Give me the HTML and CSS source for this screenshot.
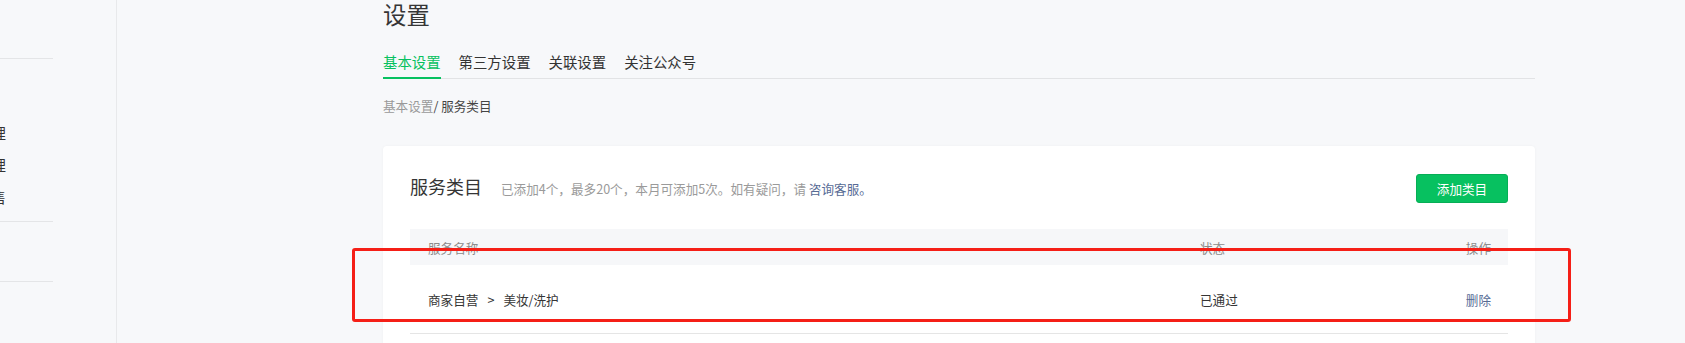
FILE: index.html
```html
<!DOCTYPE html>
<html lang="zh-CN">
<head>
<meta charset="utf-8">
<title>设置</title>
<link rel="stylesheet" href="styles.css">
</head>
<body>
<div class="app">
  <aside class="sidebar">
    <div class="sb-sec sb-top"></div>
    <div class="sb-sec sb-items">
      <div class="sb-item">管理</div>
      <div class="sb-item">管理</div>
      <div class="sb-item">发售</div>
    </div>
    <div class="sb-sec sb-mid"></div>
  </aside>
  <main class="main">
    <div class="content">
      <h1 class="page-title">设置</h1>
      <nav class="tabs">
        <a class="tab active">基本设置</a>
        <a class="tab">第三方设置</a>
        <a class="tab">关联设置</a>
        <a class="tab">关注公众号</a>
      </nav>
      <div class="breadcrumb"><span class="crumb-link">基本设置</span>/ 服务类目</div>
      <section class="card">
        <div class="card-head">
          <div class="card-title-group">
            <h2 class="card-title">服务类目</h2>
            <p class="card-desc">已添加4个，最多20个，本月可添加5次。如有疑问，请 <a class="link">咨询客服。</a></p>
          </div>
          <button class="btn-primary">添加类目</button>
        </div>
        <div class="table">
          <div class="tr th">
            <div class="cell">服务名称</div>
            <div class="cell">状态</div>
            <div class="cell">操作</div>
          </div>
          <div class="tr td">
            <div class="cell">商家自营<span class="sep">&gt;</span>美妆/洗护</div>
            <div class="cell">已通过</div>
            <div class="cell"><a class="link">删除</a></div>
          </div>
        </div>
      </section>
    </div>
  </main>
</div>
<div class="annotation"></div>
</body>
</html>
```
FILE: styles.css
```css
* { box-sizing: border-box; }
html, body {
  margin: 0;
  padding: 0;
  height: 343px;
  overflow: hidden;
  background: #f7f8fa;
  font-family: "Noto Sans CJK SC", "Noto Sans", sans-serif;
  color: #333;
}
.app {
  display: flex;
  height: 343px;
}
.sidebar {
  width: 117px;
  flex: none;
  border-right: 1px solid #e8e9eb;
  overflow: hidden;
}
.sb-sec {
  width: 53px;
  border-bottom: 1px solid #e4e5e7;
}
.sb-top { height: 59px; }
.sb-items {
  padding: 58px 0 8px;
}
.sb-item {
  font-size: 14.4px;
  line-height: 32px;
  white-space: nowrap;
  margin-left: -23px;
  color: #333;
}
.sb-mid { height: 60px; }
.main {
  flex: 1;
  padding-left: 266px;
}
.content {
  width: 1152px;
}
.page-title {
  margin: 0;
  font-size: 23.4px;
  line-height: 28px;
  font-weight: normal;
  color: #353535;
  height: 30px;
}
.tabs {
  display: flex;
  gap: 18px;
  margin-top: 22px;
  border-bottom: 1px solid #e2e3e5;
}
.tab {
  font-size: 14.4px;
  line-height: 20px;
  padding-bottom: 5px;
  border-bottom: 2px solid transparent;
  margin-bottom: -1px;
  color: #333;
}
.tab.active {
  color: #07c160;
  border-bottom-color: #07c160;
}
.breadcrumb {
  margin-top: 17px;
  font-size: 12.6px;
  line-height: 20px;
  color: #444;
}
.crumb-link { color: #999; }
.card {
  margin-top: 30px;
  background: #fff;
  border-radius: 4px;
  box-shadow: 0 0 3px rgba(0,0,0,0.04);
  padding: 28px 27px 40px;
}
.card-head {
  display: flex;
  align-items: flex-start;
  justify-content: space-between;
}
.card-title-group {
  display: flex;
  align-items: baseline;
  gap: 19px;
}
.card-title {
  margin: 0;
  font-size: 18px;
  line-height: 24px;
  font-weight: normal;
  color: #353535;
}
.card-desc {
  margin: 0;
  font-size: 12.6px;
  line-height: 20px;
  color: #9a9a9a;
}
.link { color: #576b95; }
.btn-primary {
  width: 92px;
  height: 29px;
  background: #07c160;
  border: 1px solid #06ae56;
  border-radius: 3px;
  color: #fff;
  font-family: inherit;
  font-size: 12.6px;
  line-height: 20px;
  padding: 0;
}
.table {
  margin-top: 26px;
}
.tr {
  display: grid;
  grid-template-columns: 772px 1fr auto;
  align-items: center;
  padding: 0 17px 0 18px;
  font-size: 12.6px;
}
.th {
  height: 36px;
  background: #f6f7f9;
  color: #8c8c8c;
}
.td {
  height: 69px;
  border-bottom: 1px solid #e5e5e5;
  color: #353535;
}
.sep {
  margin: 0 9px;
}
.annotation {
  position: absolute;
  left: 352px;
  top: 248px;
  width: 1219px;
  height: 74px;
  border: 3px solid #f51f17;
  border-radius: 3px;
  pointer-events: none;
}
```
